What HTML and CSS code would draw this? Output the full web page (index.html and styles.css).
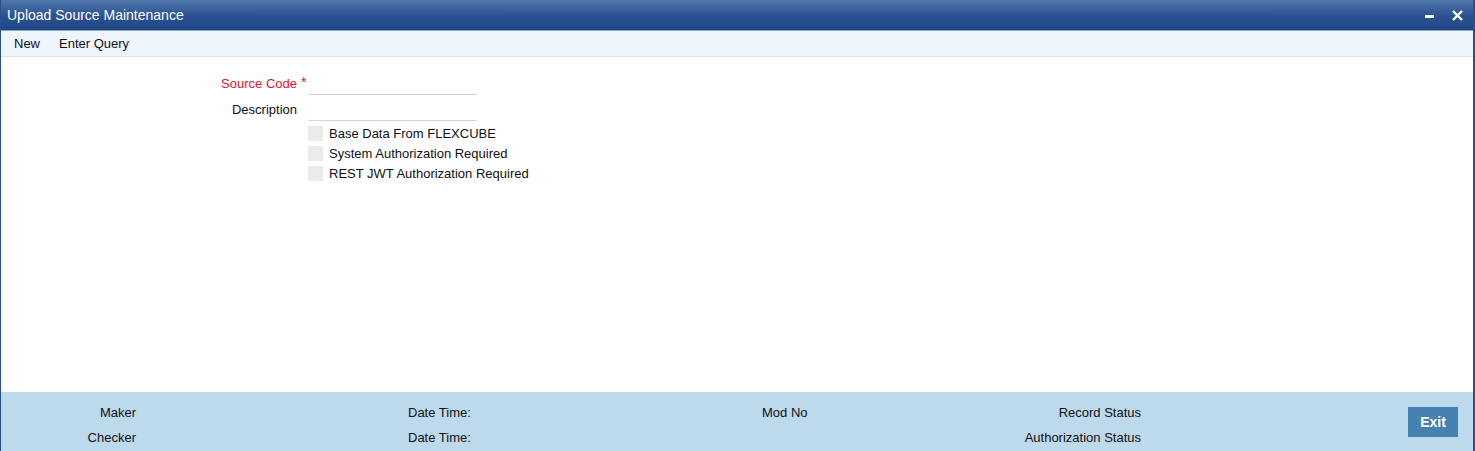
FILE: index.html
```html
<!DOCTYPE html>
<html lang="en">
<head>
    <meta charset="UTF-8">
    <meta name="viewport" content="width=device-width, initial-scale=1.0">
    <title>Upload Source Maintenance</title>
    <link rel="stylesheet" href="styles.css">
</head>
<body>
    <div class="window">
        <div class="title-bar">
            <span class="title">Upload Source Maintenance</span>
            <div class="win-btns">
                <span class="win-min"></span>
                <svg class="win-close" width="11" height="11" viewBox="0 0 11 11">
                    <path d="M1 1 L10 10 M10 1 L1 10" stroke="#fff" stroke-width="2.4" fill="none"/>
                </svg>
            </div>
        </div>
        <div class="toolbar">
            <span class="tool">New</span>
            <span class="tool">Enter Query</span>
        </div>
        <div class="content">
            <div class="form">
                <label class="lbl required">Source Code</label>
                <span class="star">*</span>
                <div class="field"></div>

                <label class="lbl">Description</label>
                <span></span>
                <div class="field"></div>

                <span></span><span></span>
                <div class="checks">
                    <div class="check"><span class="box"></span>Base Data From FLEXCUBE</div>
                    <div class="check"><span class="box"></span>System Authorization Required</div>
                    <div class="check"><span class="box"></span>REST JWT Authorization Required</div>
                </div>
            </div>
        </div>
        <div class="footer">
            <span class="f-lbl">Maker</span>
            <span></span>
            <span class="f-txt">Date Time:</span>
            <span class="f-txt">Mod No</span>
            <span class="f-stat">Record Status</span>
            <div class="f-btn"><button class="exit-btn">Exit</button></div>

            <span class="f-lbl">Checker</span>
            <span></span>
            <span class="f-txt">Date Time:</span>
            <span></span>
            <span class="f-stat">Authorization Status</span>
        </div>
    </div>
</body>
</html>
```

FILE: styles.css
```css
html, body {
    margin: 0;
    padding: 0;
}
body {
    font-family: "Liberation Sans", Arial, sans-serif;
    font-size: 13px;
    color: #111;
    background: #fff;
}
.window {
    width: 1475px;
    height: 451px;
    box-sizing: border-box;
    border-left: 1px solid #2b4f8c;
    border-right: 2px solid #2b4f8c;
    display: flex;
    flex-direction: column;
}
.title-bar {
    height: 30px;
    flex-shrink: 0;
    display: flex;
    align-items: center;
    justify-content: space-between;
    background: linear-gradient(to bottom, #5177ae, #2a5190 55%, #1f4787);
    color: #fff;
    padding: 0 10px 0 6px;
}
.title {
    font-size: 14px;
}
.win-btns {
    display: flex;
    align-items: center;
    gap: 18px;
}
.win-min {
    display: block;
    width: 9px;
    height: 3px;
    background: #fff;
    margin-top: 2px;
}
.toolbar {
    height: 25px;
    flex-shrink: 0;
    display: flex;
    align-items: center;
    gap: 19px;
    padding-left: 13px;
    background: #eef5fd;
    border-top: 1px solid #8aa6c6;
    border-bottom: 1px solid #dfe3e8;
}
.tool {
    color: #111;
}
.content {
    flex: 1;
    background: #fff;
}
.form {
    display: grid;
    grid-template-columns: 296px 12px 168px;
    row-gap: 3px;
    margin-top: 15px;
}
.lbl {
    text-align: right;
    line-height: 22px;
    padding-top: 1px;
    align-self: start;
}
.lbl.required {
    color: #e8122d;
}
.star {
    color: #e8122d;
    font-size: 14px;
    line-height: 12px;
    padding-left: 4px;
    padding-top: 4px;
}
.field {
    height: 22px;
    border-bottom: 1px solid #d4d4d4;
}
.checks {
    display: flex;
    flex-direction: column;
    gap: 5px;
    margin-top: 2px;
    margin-left: -1px;
}
.check {
    display: flex;
    align-items: center;
    height: 15px;
    white-space: nowrap;
}
.box {
    width: 15px;
    height: 15px;
    background: #ebebeb;
    margin-right: 6px;
    flex-shrink: 0;
}
.footer {
    height: 59px;
    flex-shrink: 0;
    background: #bdd9ec;
    box-sizing: border-box;
    padding-top: 8px;
    display: grid;
    grid-template-columns: 135px 272px 354px 120px 259px 1fr;
    grid-template-rows: 25px 25px;
}
.f-lbl {
    text-align: right;
    line-height: 25px;
}
.f-txt {
    line-height: 25px;
}
.f-stat {
    text-align: right;
    line-height: 25px;
}
.f-btn {
    grid-row: 1 / span 2;
    grid-column: 6;
    display: flex;
    justify-content: flex-end;
    align-items: center;
    padding-right: 15px;
    padding-bottom: 6px;
}
.exit-btn {
    width: 50px;
    height: 30px;
    border: none;
    background: #4682b1;
    color: #fff;
    font-family: "Liberation Sans", Arial, sans-serif;
    font-size: 14px;
    font-weight: bold;
    padding: 0;
}
```
